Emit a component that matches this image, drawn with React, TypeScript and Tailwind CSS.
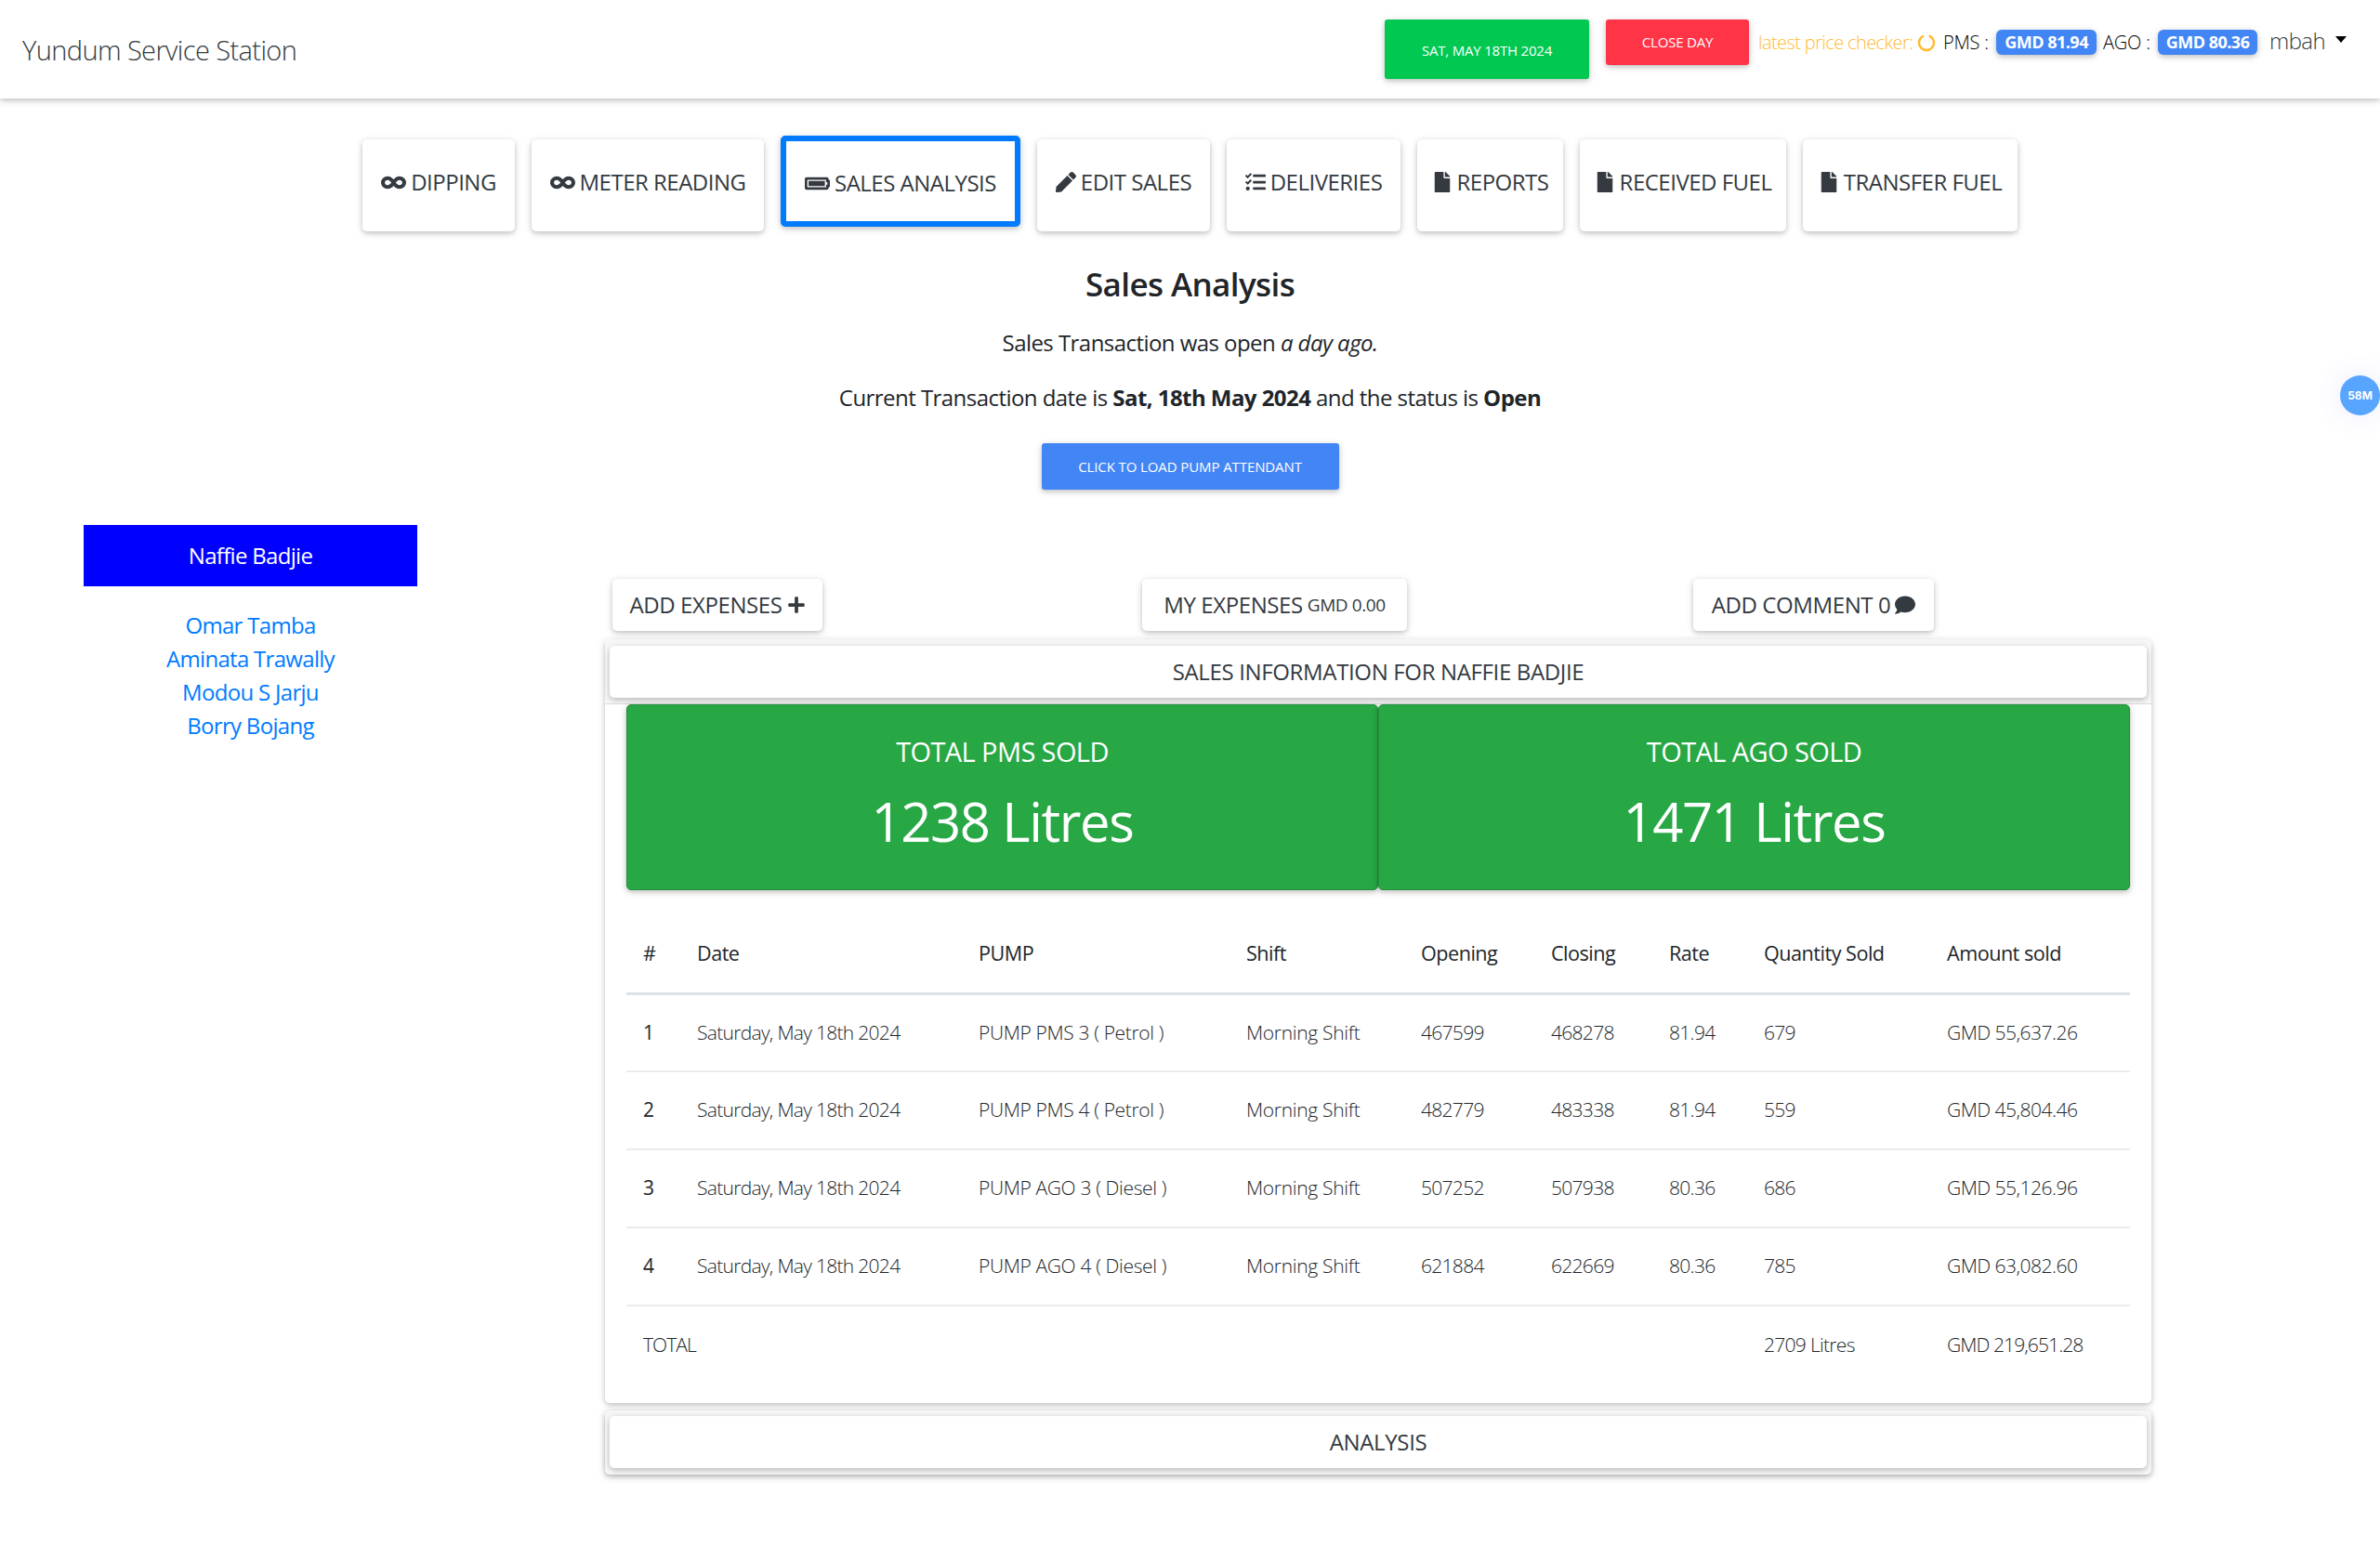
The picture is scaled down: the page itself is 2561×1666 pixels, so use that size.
import React from 'react';
import { FaInfinity, FaBatteryFull, FaPen, FaTasks, FaFile, FaPlus, FaComment } from 'react-icons/fa';

const font = "font-['Open_Sans','Noto_Sans',sans-serif]";

const tabs = [
  { label: 'DIPPING', icon: FaInfinity, w: 'w-[164px]', size: 'text-[27px]' },
  { label: 'METER READING', icon: FaInfinity, w: 'w-[250px]', size: 'text-[27px]' },
  { label: 'SALES ANALYSIS', icon: FaBatteryFull, w: 'w-[258px]', size: 'text-[27px]', active: true },
  { label: 'EDIT SALES', icon: FaPen, w: 'w-[186px]', size: 'text-[22px]' },
  { label: 'DELIVERIES', icon: FaTasks, w: 'w-[187px]', size: 'text-[22px]' },
  { label: 'REPORTS', icon: FaFile, w: 'w-[157px]', size: 'text-[22px]' },
  { label: 'RECEIVED FUEL', icon: FaFile, w: 'w-[222px]', size: 'text-[22px]' },
  { label: 'TRANSFER FUEL', icon: FaFile, w: 'w-[231px]', size: 'text-[22px]' },
];

const rows = [
  ['1', 'PUMP PMS 3 ( Petrol )', '467599', '468278', '81.94', '679', 'GMD 55,637.26'],
  ['2', 'PUMP PMS 4 ( Petrol )', '482779', '483338', '81.94', '559', 'GMD 45,804.46'],
  ['3', 'PUMP AGO 3 ( Diesel )', '507252', '507938', '80.36', '686', 'GMD 55,126.96'],
  ['4', 'PUMP AGO 4 ( Diesel )', '621884', '622669', '80.36', '785', 'GMD 63,082.60'],
];

const cardShadow = 'shadow-[0_2px_5px_0_rgba(0,0,0,0.16),0_2px_10px_0_rgba(0,0,0,0.12)]';

const Tab = ({ label, icon: Icon, w, size, active }: any) => (
  <div
    className={`${w} ${cardShadow} flex justify-center rounded-[5px] bg-white text-[#343a40] ${
      active ? 'h-[98px] border-[6px] border-[#007bff] pt-[27px] -mt-1' : 'h-[99px] pt-[28px]'
    }`}
  >
    <span className="flex h-9 items-center gap-[5px] text-[24px] tracking-[-0.5px] whitespace-nowrap">
      <Icon className={size} />
      {label}
    </span>
  </div>
);

const Pill = ({ children, w }: any) => (
  <div className={`${w} ${cardShadow} flex h-14 items-center justify-center gap-[5px] rounded-[5px] bg-white text-[24px] tracking-[-0.4px] whitespace-nowrap text-[#343a40]`}>
    {children}
  </div>
);

const CardHeader = ({ children }: any) => (
  <div className={`${cardShadow} mx-[5px] flex h-14 items-center justify-center rounded-[5px] bg-white text-[24px] tracking-[-0.35px] text-[#343a40]`}>
    {children}
  </div>
);

const Stat = ({ title, value }: any) => (
  <div className={`${cardShadow} flex h-[200px] flex-1 flex-col items-center rounded-[5px] border border-[#258f3f] bg-[#28a745] pt-[30px] text-white`}>
    <div className="text-[29px] leading-10 tracking-[-0.6px]">{title}</div>
    <div className="mt-5 text-[58px] leading-[70px] tracking-[-1.4px]">{value}</div>
  </div>
);

const Th = ({ children, w }: any) => (
  <th className={`${w} h-[84px] border-b-[3px] border-[#dee2e6] px-[18px] text-left text-[21.6px] font-normal tracking-[-0.5px] text-[#212529]`}>
    {children}
  </th>
);

const Td = ({ children, t = 'tracking-[-0.6px]' }: any) => (
  <td className={`${t} h-[84px] border-b-2 border-[#e9ecef] px-[18px] text-[21px] font-light whitespace-nowrap text-[#212529]`}>
    {children}
  </td>
);

const Spinner = () => (
  <svg viewBox="0 0 20 20" className="h-5 w-5">
    <circle cx="10" cy="10" r="8" fill="none" stroke="#ffbb33" strokeWidth="2.5" strokeDasharray="44 6.3" transform="rotate(-70 10 10)" />
  </svg>
);

export default function App() {
  return (
    <div className={`${font} relative min-h-[1666px] overflow-hidden bg-white text-[#212529]`}>
      <nav className="flex h-[106px] items-start justify-between bg-white shadow-[0_2px_5px_0_rgba(0,0,0,0.16),0_2px_10px_0_rgba(0,0,0,0.12)]">
        <span className="mt-[34px] ml-6 text-[29px] leading-10 font-light tracking-[-0.6px] text-[#343a40]">Yundum Service Station</span>
        <div className="mt-[21px] flex items-start">
          <div className={`${cardShadow} flex h-16 w-[220px] items-center justify-center rounded-[3px] bg-[#00c851] pt-[3px] text-[15px] tracking-[-0.2px] text-white`}>
            SAT, MAY 18TH 2024
          </div>
          <div className={`${cardShadow} ml-[18px] flex h-[49px] w-[154px] items-center justify-center rounded-[3px] bg-[#ff3547] text-[15px] tracking-[-0.2px] text-white`}>
            CLOSE DAY
          </div>
          <div className="mt-[11px] ml-[10px] flex h-[27px] items-center text-[20px] tracking-[-0.6px]">
            <span className="w-[171px] font-light whitespace-nowrap text-[#ffbb33]">latest price checker:</span>
            <Spinner />
            <span className="ml-2 w-[57px] font-light tracking-[-0.2px] whitespace-nowrap text-black">PMS :</span>
            <span className={`${cardShadow} flex h-[27px] w-[108px] items-center justify-center rounded-[6px] bg-[#4285f4] text-[18px] font-bold tracking-[-0.5px] text-white`}>GMD 81.94</span>
            <span className="ml-[7px] w-[59px] font-light tracking-[-0.2px] whitespace-nowrap text-black">AGO :</span>
            <span className={`${cardShadow} flex h-[27px] w-[107px] items-center justify-center rounded-[6px] bg-[#4285f4] text-[18px] font-bold tracking-[-0.5px] text-white`}>GMD 80.36</span>
            <span className="mt-[-3px] ml-[13px] text-[24px] font-light text-[#343a40]">mbah</span>
            <span className="mt-[-6px] mr-[36px] ml-[11px] h-0 w-0 border-x-[6.5px] border-t-[7px] border-x-transparent border-t-black" />
          </div>
        </div>
      </nav>

      <div className="mt-11 flex items-start justify-center gap-[18px]">
        {tabs.map((t) => (
          <Tab key={t.label} {...t} />
        ))}
      </div>

      <div className="flex flex-col items-center">
        <h3 className="mt-[35px] text-[35px] leading-[44px] font-semibold tracking-[-0.6px]">Sales Analysis</h3>
        <p className="mt-[23px] text-[24px] leading-9 tracking-[-0.55px]">
          Sales Transaction was open <em>a day ago.</em>
        </p>
        <p className="mt-[23px] text-[24px] leading-9 tracking-[-0.55px]">
          Current Transaction date is <b>Sat, 18th May 2024</b> and the status is <b>Open</b>
        </p>
        <div className={`${cardShadow} mt-[31px] flex h-[50px] w-[320px] items-center justify-center rounded-[3px] bg-[#4285f4] text-[15px] tracking-[-0.1px] text-white`}>
          CLICK TO LOAD PUMP ATTENDANT
        </div>
      </div>

      <div className="flex items-start pl-[90px]">
        <aside className="mt-[38px] w-[359px] text-center text-[24px] tracking-[-0.7px] text-[#007bff]">
          <div className="mb-6 flex h-[66px] items-center justify-center bg-[#0000ff] text-white">Naffie Badjie</div>
          <div className="leading-9">Omar Tamba</div>
          <div className="leading-9">Aminata Trawally</div>
          <div className="leading-9">Modou S Jarju</div>
          <div className="leading-9">Borry Bojang</div>
        </aside>

        <main className="mt-[96px] ml-[202px] w-[1664px]">
          <div className="flex">
            <Pill w="ml-2 w-[226px]">
              ADD EXPENSES <FaPlus className="text-[20px]" />
            </Pill>
            <Pill w="ml-[344px] w-[285px]">
              MY EXPENSES <small className="text-[19px] tracking-[-0.4px]">GMD 0.00</small>
            </Pill>
            <Pill w="ml-[308px] w-[259px]">
              ADD COMMENT 0 <FaComment className="text-[22px]" />
            </Pill>
          </div>

          <section className={`${cardShadow} mt-[9px] h-[822px] rounded-[5px] bg-white`}>
            <div className="h-[70px] rounded-t-[5px] border-b border-[#dfdfdf] bg-[#f7f7f7] pt-[7px]">
              <CardHeader>SALES INFORMATION FOR NAFFIE BADJIE</CardHeader>
            </div>
            <div className="mx-[23px]">
              <div className="flex">
                <Stat title="TOTAL PMS SOLD" value="1238 Litres" />
                <Stat title="TOTAL AGO SOLD" value="1471 Litres" />
              </div>
              <table className="mt-[27px] w-full table-fixed border-collapse">
                <thead>
                  <tr>
                    <Th w="w-[58px]">#</Th>
                    <Th w="w-[303px]">Date</Th>
                    <Th w="w-[288px]">PUMP</Th>
                    <Th w="w-[188px]">Shift</Th>
                    <Th w="w-[140px]">Opening</Th>
                    <Th w="w-[127px]">Closing</Th>
                    <Th w="w-[102px]">Rate</Th>
                    <Th w="w-[197px]">Quantity Sold</Th>
                    <Th w="w-[215px]">Amount sold</Th>
                  </tr>
                </thead>
                <tbody>
                  {rows.map((r) => (
                    <tr key={r[0]}>
                      <td className="border-b-2 border-[#e9ecef] px-[18px] text-[21px] text-[#212529]">{r[0]}</td>
                      <Td t="tracking-[-0.7px]">Saturday, May 18th 2024</Td>
                      <Td t="tracking-[-0.35px]">{r[1]}</Td>
                      <Td t="tracking-[-0.3px]">Morning Shift</Td>
                      <Td t="tracking-[-0.7px]">{r[2]}</Td>
                      <Td t="tracking-[-0.7px]">{r[3]}</Td>
                      <Td t="tracking-[-0.7px]">{r[4]}</Td>
                      <Td t="tracking-[-0.7px]">{r[5]}</Td>
                      <Td t="tracking-[-0.5px]">{r[6]}</Td>
                    </tr>
                  ))}
                  <tr className="font-light">
                    <td colSpan={7} className="h-[84px] px-[18px] text-[21px] tracking-[-0.9px]">TOTAL</td>
                    <td className="px-[18px] text-[21px] tracking-[-0.7px] whitespace-nowrap">2709 Litres</td>
                    <td className="px-[18px] text-[21px] tracking-[-0.9px] whitespace-nowrap">GMD 219,651.28</td>
                  </tr>
                </tbody>
              </table>
            </div>
          </section>

          <section className="mt-2 h-[69px] rounded-[5px] bg-[#f7f7f7] pt-[6px] shadow-[0_2px_5px_0_rgba(0,0,0,0.2),0_2px_10px_0_rgba(0,0,0,0.16)]">
            <CardHeader>ANALYSIS</CardHeader>
          </section>
        </main>
      </div>

      <div className="absolute top-[404px] right-0 flex h-[43px] w-[43px] items-center justify-center rounded-full bg-[#57a5ff] font-['Inter',sans-serif] text-[12px] font-bold text-white shadow-[0_0_30px_rgba(70,90,255,0.12)]">
        58M
      </div>
    </div>
  );
}
